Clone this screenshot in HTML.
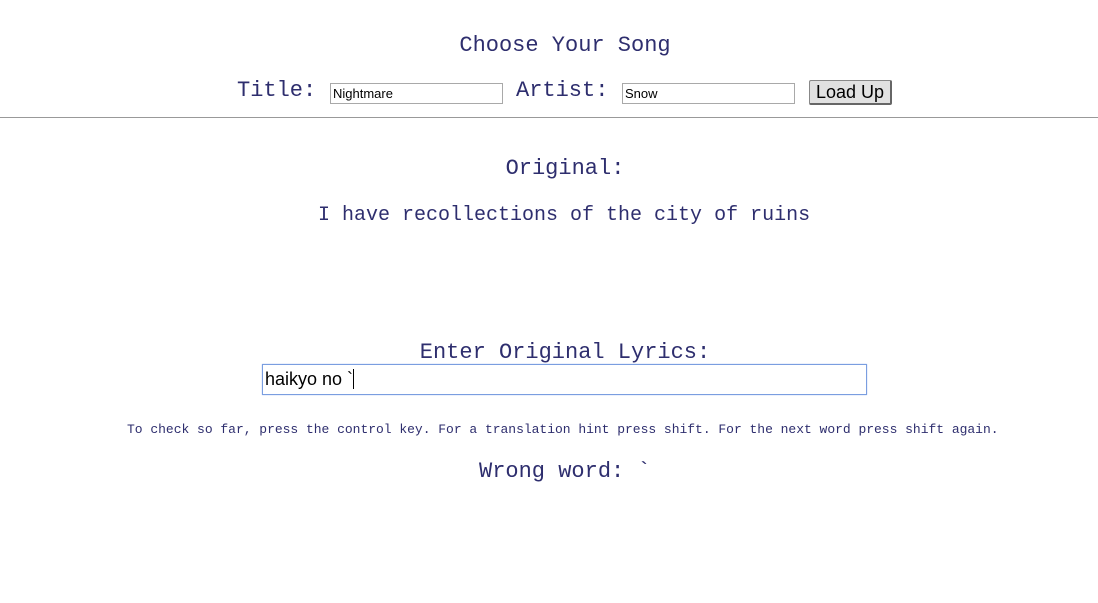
<!DOCTYPE html>
<html><head><style>
body{margin:0;width:1098px;height:603px;background:#fff;position:relative;font-family:"Liberation Mono","DejaVu Sans Mono",monospace;color:#2e2e6e;overflow:hidden}
.a{position:absolute;white-space:nowrap;line-height:1}
input{position:absolute;font-family:"Liberation Sans",Arial,sans-serif;box-sizing:border-box;border:1px solid #a9a9a9;padding:0 2px;font-size:13px;color:#000;background:#fff}
</style></head><body>
<div class="a" style="left:0;width:1130px;text-align:center;top:35px;font-size:22px">Choose Your Song</div>
<div class="a" style="left:237px;top:80px;font-size:22px">Title:</div>
<input style="left:330px;top:83px;width:173px;height:21px" value="Nightmare">
<div class="a" style="left:516px;top:80px;font-size:22px">Artist:</div>
<input style="left:622px;top:83px;width:173px;height:21px" value="Snow">
<div class="a" style="left:809px;top:80px;width:83px;height:25px;box-sizing:border-box;border:1px solid #888;border-right:2px solid #666;border-bottom:2px solid #666;background:#e1e1e1;font-family:'Liberation Sans',Arial,sans-serif;font-size:18px;color:#000;text-align:center;line-height:22px;border-radius:2px">Load Up</div>
<div class="a" style="left:0;top:117px;width:1098px;height:1px;background:#999"></div>
<div class="a" style="left:0;width:1130px;text-align:center;top:158px;font-size:22px">Original:</div>
<div class="a" style="left:318px;top:206px;font-size:20px">I have recollections of the city of ruins</div>
<div class="a" style="left:0;width:1130px;text-align:center;top:342px;font-size:22px">Enter Original Lyrics:</div>
<div class="a" style="left:262px;top:364px;width:605px;height:31px;box-sizing:border-box;border:1px solid #7a9ee0;box-shadow:0 0 1px #9bb8ee;font-family:'Liberation Sans',Arial,sans-serif;font-size:18px;color:#000;line-height:29px;padding-left:2px">haikyo no `<span style="display:inline-block;width:1px;height:20px;background:#000;vertical-align:-4px"></span></div>
<div class="a" style="left:127px;top:423px;font-size:13px;letter-spacing:-0.02px">To check so far, press the control key. For a translation hint press shift. For the next word press shift again.</div>
<div class="a" style="left:479px;top:461px;font-size:22px">Wrong word: `</div>
</body></html>
